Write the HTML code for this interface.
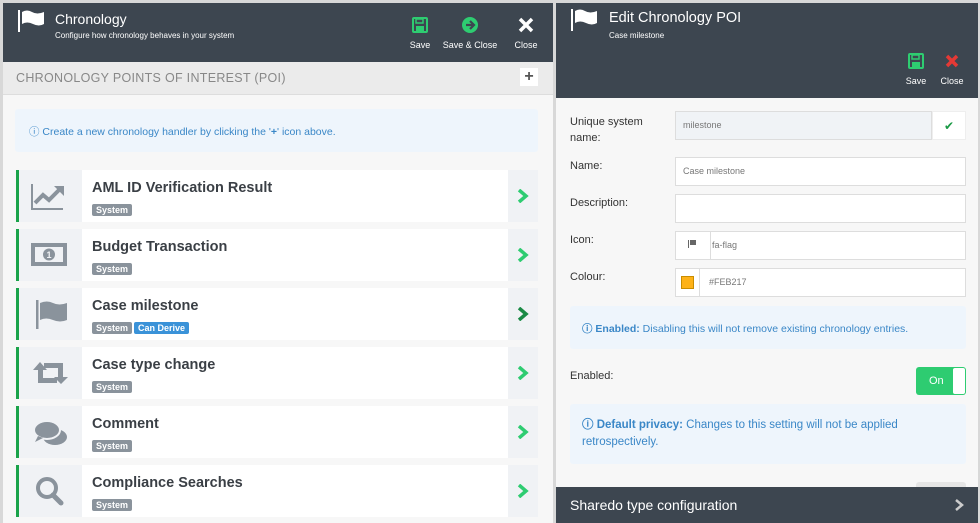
<!DOCTYPE html>
<html><head><style>
*{box-sizing:border-box;margin:0;padding:0}
body{width:980px;height:523px;overflow:hidden;background:#d8d8d8;font-family:"Liberation Sans",sans-serif;position:relative}
.abs{position:absolute}
.hdr{background:#3d4650;color:#fff}
.row{position:absolute;left:16px;width:522px;height:52px;border-left:3px solid #1aa34a;background:#fff}
.row .ic{position:absolute;left:0;top:0;width:63px;height:52px;background:#f0f2f5}
.row .ch{position:absolute;right:0;top:0;width:30px;height:52px;background:#f0f2f5}
.row .ch svg{position:absolute;left:9px;top:19px}
.row .t{position:absolute;left:73px;top:10px;font-size:14.5px;font-weight:bold;color:#3a3f45}
.tag{display:inline-block;background:#8a939c;color:#fff;font-size:9px;font-weight:bold;padding:1px 4px;border-radius:2px;margin-right:2px}
.row .tags{position:absolute;left:73px;top:30px}
.lbl{position:absolute;left:570px;font-size:11px;color:#333}
.inp{position:absolute;left:675px;width:291px;height:29px;background:#fff;border:1px solid #ddd;font-size:9px;color:#777;line-height:27px;padding-left:7px}
.info{position:absolute;background:#eef5fc;color:#3a87c7;font-size:11px;border-radius:3px}
.btn{position:absolute;text-align:center;font-size:9px;color:#fff}
.btn div{margin-top:4px}
</style></head><body>
<div class="abs" style="left:3px;top:3px;width:550px;height:520px;background:#f7f7f7"></div>
<div class="abs hdr" style="left:3px;top:3px;width:550px;height:59px">
 <svg class="abs" style="left:14px;top:6px" width="30" height="24" viewBox="0 0 30 24"><rect x="1" y="1" width="2" height="22" fill="#fff"/><path d="M5 3 Q10 0 15 3 T27 3 V15 Q22 18 16 15 T5 15Z" fill="#fff"/></svg>
 <div class="abs" style="left:52px;top:8px;font-size:14px">Chronology</div>
 <div class="abs" style="left:52px;top:28px;font-size:8px">Configure how chronology behaves in your system</div>
 <div class="btn" style="left:404px;top:13px;width:26px"><svg width="18" height="18" viewBox="0 0 18 18"><rect x="2" y="2" width="14" height="14" rx="1" fill="none" stroke="#2ecc71" stroke-width="2"/><rect x="5" y="3" width="7" height="4" fill="none" stroke="#2ecc71" stroke-width="1.5"/><rect x="5" y="10" width="8" height="5" fill="#2ecc71"/></svg><div>Save</div></div>
 <div class="btn" style="left:437px;top:13px;width:60px"><svg width="18" height="18" viewBox="0 0 18 18"><circle cx="9" cy="9" r="8" fill="#2ecc71"/><path d="M5 9h7M9 5l4 4-4 4" stroke="#3d4650" stroke-width="2.2" fill="none"/></svg><div>Save &amp; Close</div></div>
 <div class="btn" style="left:508px;top:13px;width:30px"><svg width="18" height="18" viewBox="0 0 18 18"><path d="M3 3L15 15M15 3L3 15" stroke="#fff" stroke-width="3.5"/></svg><div>Close</div></div>
</div>
<div class="abs" style="left:3px;top:62px;width:550px;height:33px;background:#ebebeb;border-bottom:1px solid #ddd"></div>
<div class="abs" style="left:16px;top:71px;font-size:12.5px;color:#888;letter-spacing:.3px">CHRONOLOGY POINTS OF INTEREST (POI)</div>
<div class="abs" style="left:520px;top:68px;width:18px;height:18px;background:#fff;color:#555;font-size:16px;font-weight:bold;text-align:center;line-height:18px">+</div>
<div class="info" style="left:15px;top:109px;width:523px;height:43px;padding:15px 14px;font-size:10.5px">&#9432; Create a new chronology handler by clicking the '<b>+</b>' icon above.</div>

<div class="row" style="top:170px"><div class="ic"><svg width="63" height="52"><path d="M13 14V39H44" stroke="#8a939c" stroke-width="2" fill="none"/><path d="M16 33L24 25L30 30L40 20" stroke="#8a939c" stroke-width="4" fill="none"/><path d="M35 16H45V26Z" fill="#8a939c"/></svg></div><div class="t">AML ID Verification Result</div><div class="tags"><span class="tag">System</span></div><div class="ch"><svg width="12" height="14"><path d="M2 1L9 7L2 13" stroke="#2ecc71" stroke-width="3.5" fill="none"/></svg></div></div>
<div class="row" style="top:229px"><div class="ic"><svg width="63" height="52"><rect x="12" y="14" width="36" height="23" fill="#8a939c"/><rect x="16" y="18" width="28" height="15" fill="#f0f2f5"/><circle cx="30" cy="25.5" r="6" fill="#8a939c"/><text x="30" y="29" font-size="9" fill="#f0f2f5" text-anchor="middle" font-weight="bold">1</text></svg></div><div class="t">Budget Transaction</div><div class="tags"><span class="tag">System</span></div><div class="ch"><svg width="12" height="14"><path d="M2 1L9 7L2 13" stroke="#2ecc71" stroke-width="3.5" fill="none"/></svg></div></div>
<div class="row" style="top:288px"><div class="ic"><svg width="63" height="52"><rect x="17" y="12" width="2.5" height="29" fill="#8a939c"/><path d="M21 15Q28 12 34 15T48 15V32Q41 35 34 32T21 32Z" fill="#8a939c"/></svg></div><div class="t">Case milestone</div><div class="tags"><span class="tag">System</span><span class="tag" style="background:#3a92d8">Can Derive</span></div><div class="ch"><svg width="12" height="14"><path d="M2 1L9 7L2 13" stroke="#1a8a45" stroke-width="3.5" fill="none"/></svg></div></div>
<div class="row" style="top:347px"><div class="ic"><svg width="63" height="52"><path d="M14 23L21 15L28 23H24V31H38V36H19V23Z" fill="#8a939c"/><path d="M25 16H44V30H49L42 37L35 30H39V21H25Z" fill="#8a939c"/></svg></div><div class="t">Case type change</div><div class="tags"><span class="tag">System</span></div><div class="ch"><svg width="12" height="14"><path d="M2 1L9 7L2 13" stroke="#2ecc71" stroke-width="3.5" fill="none"/></svg></div></div>
<div class="row" style="top:406px"><div class="ic"><svg width="63" height="52"><ellipse cx="36" cy="31" rx="12" ry="8" fill="#8a939c"/><ellipse cx="28" cy="24" rx="13" ry="9" fill="#8a939c" stroke="#f0f2f5" stroke-width="2"/><path d="M19 30l-3 6 8-4z" fill="#8a939c"/></svg></div><div class="t">Comment</div><div class="tags"><span class="tag">System</span></div><div class="ch"><svg width="12" height="14"><path d="M2 1L9 7L2 13" stroke="#2ecc71" stroke-width="3.5" fill="none"/></svg></div></div>
<div class="row" style="top:465px"><div class="ic"><svg width="63" height="52"><circle cx="28" cy="23" r="9" stroke="#8a939c" stroke-width="4" fill="none"/><path d="M34 30L42 38" stroke="#8a939c" stroke-width="5" stroke-linecap="round"/></svg></div><div class="t">Compliance Searches</div><div class="tags"><span class="tag">System</span></div><div class="ch"><svg width="12" height="14"><path d="M2 1L9 7L2 13" stroke="#2ecc71" stroke-width="3.5" fill="none"/></svg></div></div>

<div class="abs" style="left:556px;top:3px;width:422px;height:520px;background:#f7f7f7"></div>
<div class="abs hdr" style="left:556px;top:3px;width:422px;height:95px">
 <svg class="abs" style="left:14px;top:5px" width="30" height="24" viewBox="0 0 30 24"><rect x="1" y="1" width="2" height="22" fill="#fff"/><path d="M5 3 Q10 0 15 3 T27 3 V15 Q22 18 16 15 T5 15Z" fill="#fff"/></svg>
 <div class="abs" style="left:53px;top:7px;font-size:14.5px">Edit Chronology POI</div>
 <div class="abs" style="left:53px;top:28px;font-size:8px">Case milestone</div>
 <div class="btn" style="left:347px;top:49px;width:26px"><svg width="18" height="18" viewBox="0 0 18 18"><rect x="2" y="2" width="14" height="14" rx="1" fill="none" stroke="#2ecc71" stroke-width="2"/><rect x="5" y="3" width="7" height="4" fill="none" stroke="#2ecc71" stroke-width="1.5"/><rect x="5" y="10" width="8" height="5" fill="#2ecc71"/></svg><div>Save</div></div>
 <div class="btn" style="left:381px;top:49px;width:30px"><svg width="18" height="18" viewBox="0 0 18 18"><path d="M4 4L14 14M14 4L4 14" stroke="#e53935" stroke-width="3.5"/></svg><div>Close</div></div>
</div>
<div class="lbl" style="top:114px;line-height:16px">Unique system<br>name:</div>
<div class="inp" style="top:111px;width:257px;background:#f0f3f6">milestone</div>
<div class="abs" style="left:932px;top:111px;width:34px;height:29px;background:#fff;border:1px solid #eee;color:#1a9a45;text-align:center;line-height:28px;font-size:12px">✔</div>
<div class="lbl" style="top:160px">Name:</div>
<div class="inp" style="top:157px">Case milestone</div>
<div class="lbl" style="top:197px">Description:</div>
<div class="inp" style="top:194px"></div>
<div class="lbl" style="top:234px">Icon:</div>
<div class="inp" style="top:231px;padding-left:36px">fa-flag</div>
<div class="abs" style="left:710px;top:232px;width:1px;height:27px;background:#ddd"></div>
<div class="abs" style="left:688px;top:240px;width:1px;height:8px;background:#666"></div><div class="abs" style="left:690px;top:240px;width:6px;height:5px;background:#666"></div>
<div class="lbl" style="top:271px">Colour:</div>
<div class="inp" style="top:268px;padding-left:33px">#FEB217</div>
<div class="abs" style="left:699px;top:269px;width:1px;height:27px;background:#ddd"></div>
<div class="abs" style="left:681px;top:276px;width:13px;height:13px;background:#feb217;border:1px solid #c98c00"></div>
<div class="info" style="left:570px;top:306px;width:396px;height:43px;padding:15px 12px;font-size:10.5px"><b>&#9432; Enabled:</b> Disabling this will not remove existing chronology entries.</div>
<div class="lbl" style="top:370px">Enabled:</div>
<div class="abs" style="left:916px;top:367px;width:50px;height:28px;background:#2ecc71;border-radius:3px;color:#fff;font-size:11px;line-height:28px;padding-left:13px">On<div class="abs" style="right:1px;top:1px;width:12px;height:26px;background:#fff;border-radius:2px"></div></div>
<div class="info" style="left:570px;top:404px;width:396px;height:60px;padding:13px 12px;line-height:17px;font-size:11.5px"><b>&#9432; Default privacy:</b> Changes to this setting will not be applied retrospectively.</div>
<div class="abs" style="left:916px;top:482px;width:50px;height:10px;background:#e5e5e5;border-radius:3px"></div>
<div class="abs hdr" style="left:556px;top:487px;width:422px;height:36px;font-size:14px;line-height:36px;padding-left:14px">Sharedo type configuration<svg class="abs" style="right:14px;top:12px" width="10" height="12"><path d="M2 1L8 6L2 11" stroke="#ccc" stroke-width="2.5" fill="none"/></svg></div>
</body></html>
